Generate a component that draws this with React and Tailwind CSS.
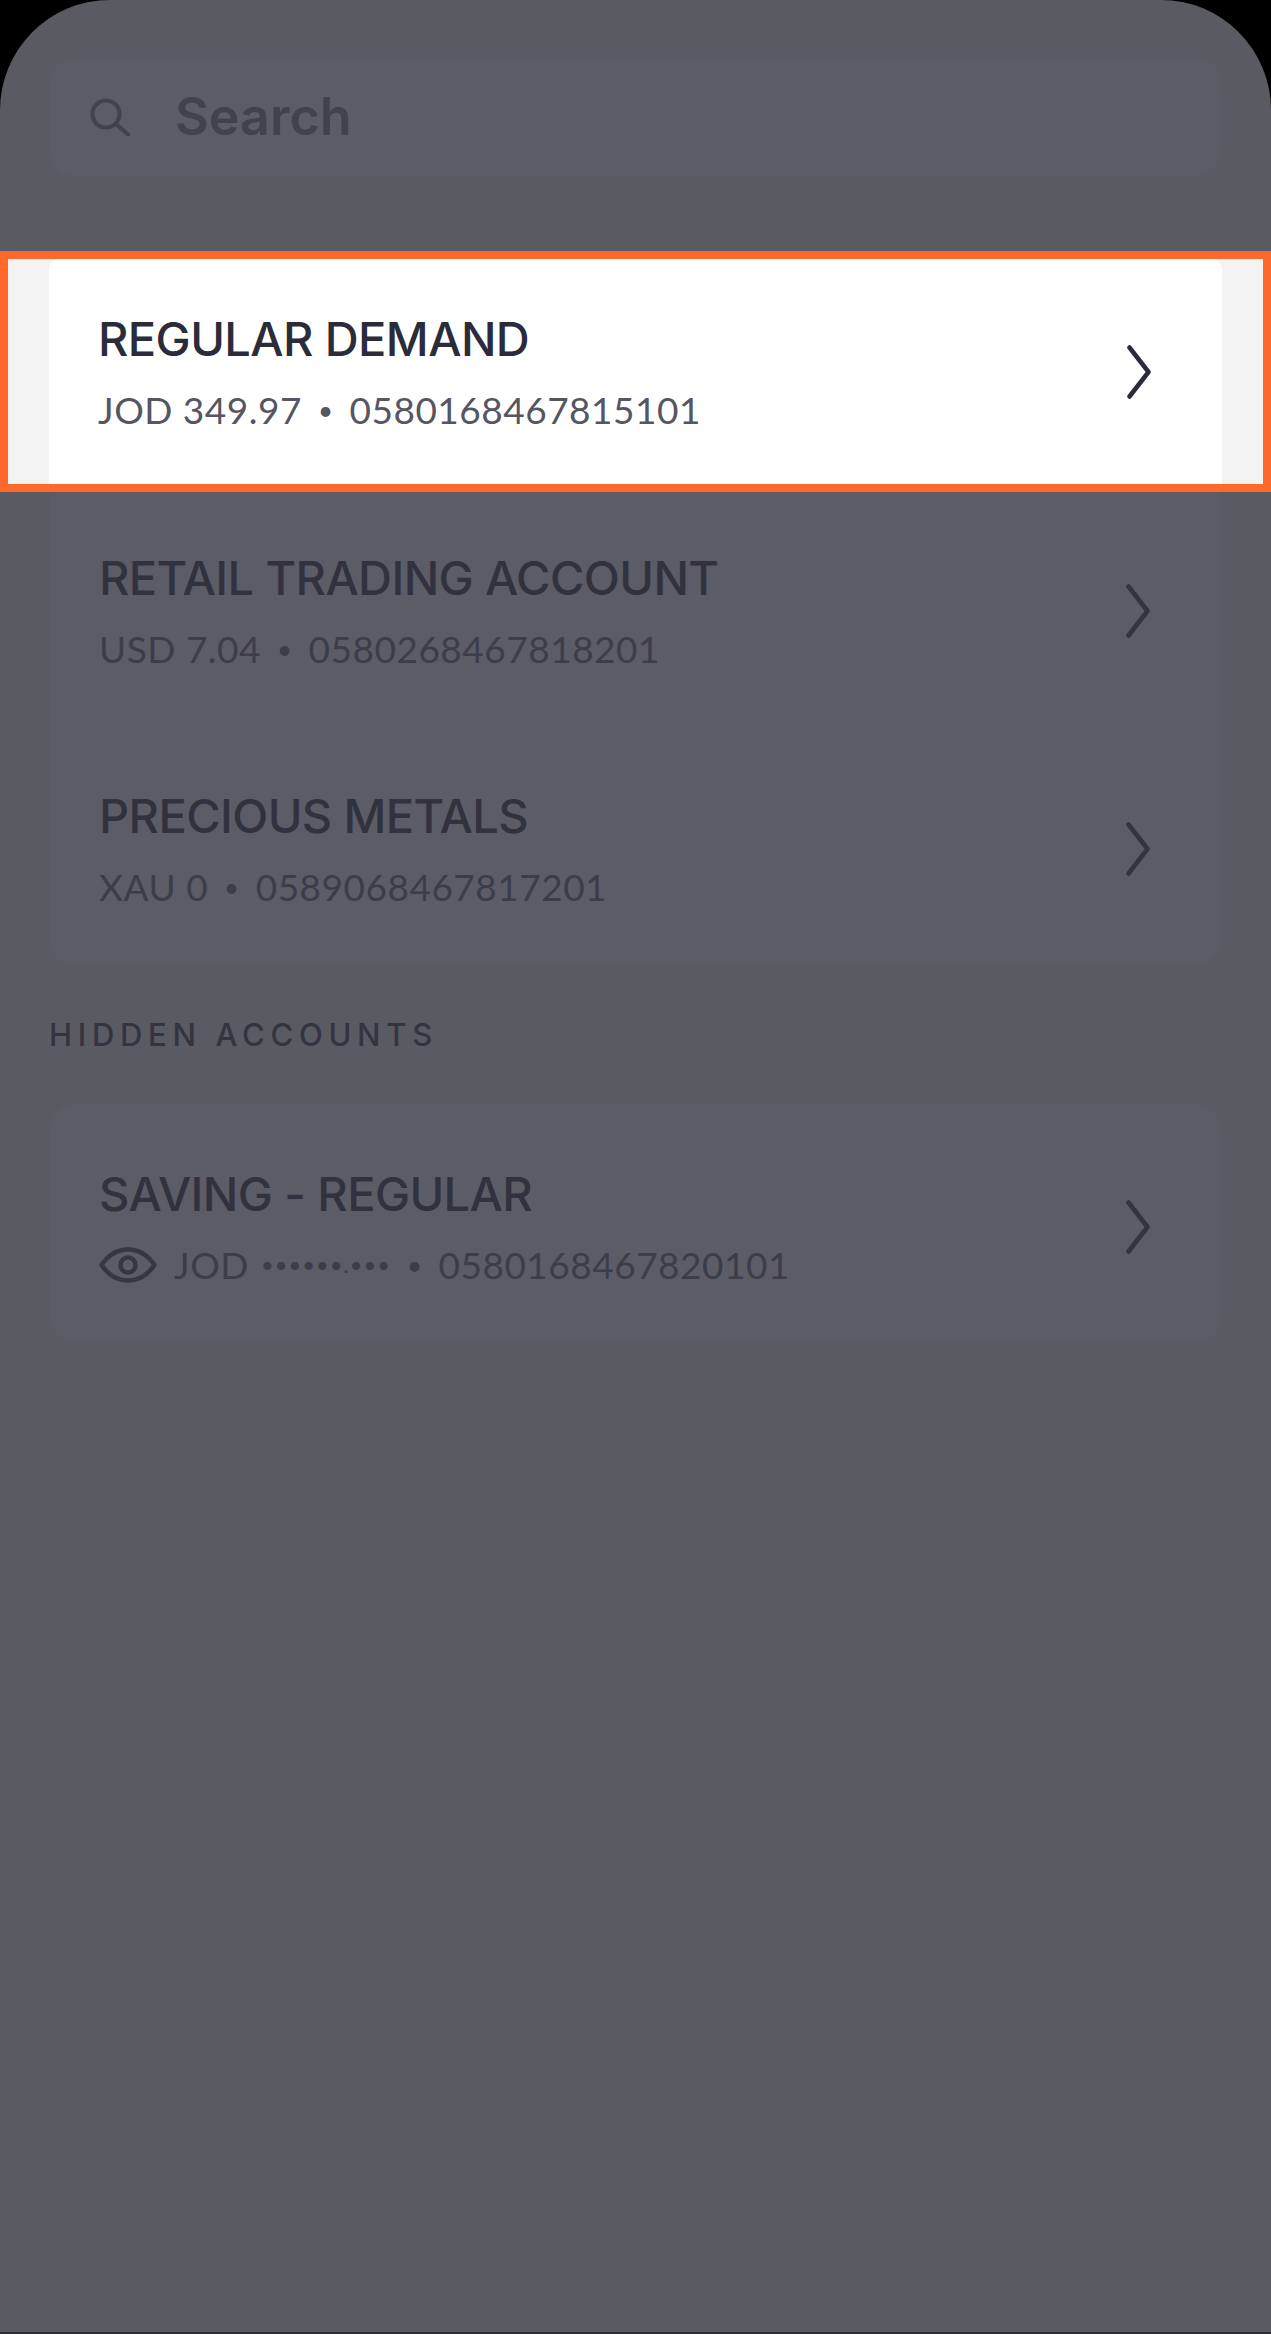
const font = "font-['Lato','Noto_Sans',sans-serif]";

function Chevron({ active }) {
    return (
        <svg
            width="24"
            height="54"
            viewBox="0 0 24 54"
            fill="none"
            className={active ? 'text-[#2b2c3a]' : 'text-[#33343f]'}
        >
            <path d="M2.5 2.5 L21.5 27 L2.5 51.5" stroke="currentColor" strokeWidth="4.5" strokeLinecap="round" strokeLinejoin="round" />
        </svg>
    );
}

function SearchIcon() {
    return (
        <svg width="40" height="38" viewBox="0 0 40 38" fill="none" className="shrink-0 text-[#41424e]">
            <circle cx="16" cy="16" r="13.5" stroke="currentColor" strokeWidth="4" />
            <path d="M26 26 L38 36.5" stroke="currentColor" strokeWidth="4" strokeLinecap="round" />
        </svg>
    );
}

function EyeIcon() {
    return (
        <svg width="58" height="36" viewBox="0 0 58 36" fill="none" className="mr-[17px] shrink-0 text-[#363742]">
            <path d="M2.5 18 C10 7 19 2.5 29 2.5 C39 2.5 48 7 55.5 18 C48 29 39 33.5 29 33.5 C19 33.5 10 29 2.5 18 Z" stroke="currentColor" strokeWidth="4.5" strokeLinejoin="round" />
            <circle cx="29" cy="18" r="7.5" stroke="currentColor" strokeWidth="4.5" />
        </svg>
    );
}

function AccountRow({ name, balance, mask, number, active, hidden }) {
    return (
        <div className={`flex items-center justify-between pl-[49px] pr-[71px] ${active ? 'h-[225px] rounded-t-[10px] bg-white' : 'h-[238px]'}`}>
            <div>
                <div className={`font-['Inter',sans-serif] text-[47px] leading-[54px] font-medium tracking-[-0.6px] ${active ? 'text-[#2b2c3a]' : 'text-[#31323e]'}`}>
                    {name}
                </div>
                <div className={`mt-[22px] flex h-[44px] items-center text-[37px] leading-[44px] tracking-[0.5px] ${active ? 'text-[#55565f]' : 'text-[#3c3d49]'}`}>
                    {hidden && <EyeIcon />}
                    <span>{balance}</span>
                    {mask && <span className="ml-[12px] text-[22px] tracking-[1px]">{mask}</span>}
                    <span className="mx-[16px] text-[26px]">•</span>
                    <span>{number}</span>
                </div>
            </div>
            <Chevron active={active} />
        </div>
    );
}

export default function App() {
    return (
        <div className={`h-[2334px] w-[1271px] overflow-hidden bg-black ${font}`}>
            <div className="flex h-full flex-col rounded-t-[110px] border-b-2 border-[#2c2c35] bg-[#5a5a63]">
                <div className="px-[50px] pt-[58px]">
                    <div className="flex h-[117px] items-center rounded-[24px] bg-[#5b5c65] pl-[40px]">
                        <SearchIcon />
                        <span className="ml-[45px] font-['Inter',sans-serif] text-[52px] font-semibold text-[#41424e]">Search</span>
                    </div>
                </div>

                <div className="mt-[76px] border-8 border-[#fc692b] bg-[#f3f3f3] px-[41px]">
                    <AccountRow active name="REGULAR DEMAND" balance="JOD 349.97" number="0580168467815101" />
                </div>

                <div className="mx-[50px] h-[472px] rounded-b-[24px] bg-[#5b5c65]">
                    <AccountRow name="RETAIL TRADING ACCOUNT" balance="USD 7.04" number="0580268467818201" />
                    <AccountRow name="PRECIOUS METALS" balance="XAU 0" number="0589068467817201" />
                </div>

                <div className="mx-[49px] mt-[51px] font-['Inter',sans-serif] text-[31px] leading-[40px] font-medium tracking-[5.7px] text-[#33343f]">
                    HIDDEN ACCOUNTS
                </div>

                <div className="mx-[50px] mt-[50px] h-[237px] rounded-[24px] bg-[#5b5c65] pt-[3px]">
                    <AccountRow hidden name="SAVING - REGULAR" balance="JOD" mask="••••••.•••" number="0580168467820101" />
                </div>
            </div>
        </div>
    );
}
